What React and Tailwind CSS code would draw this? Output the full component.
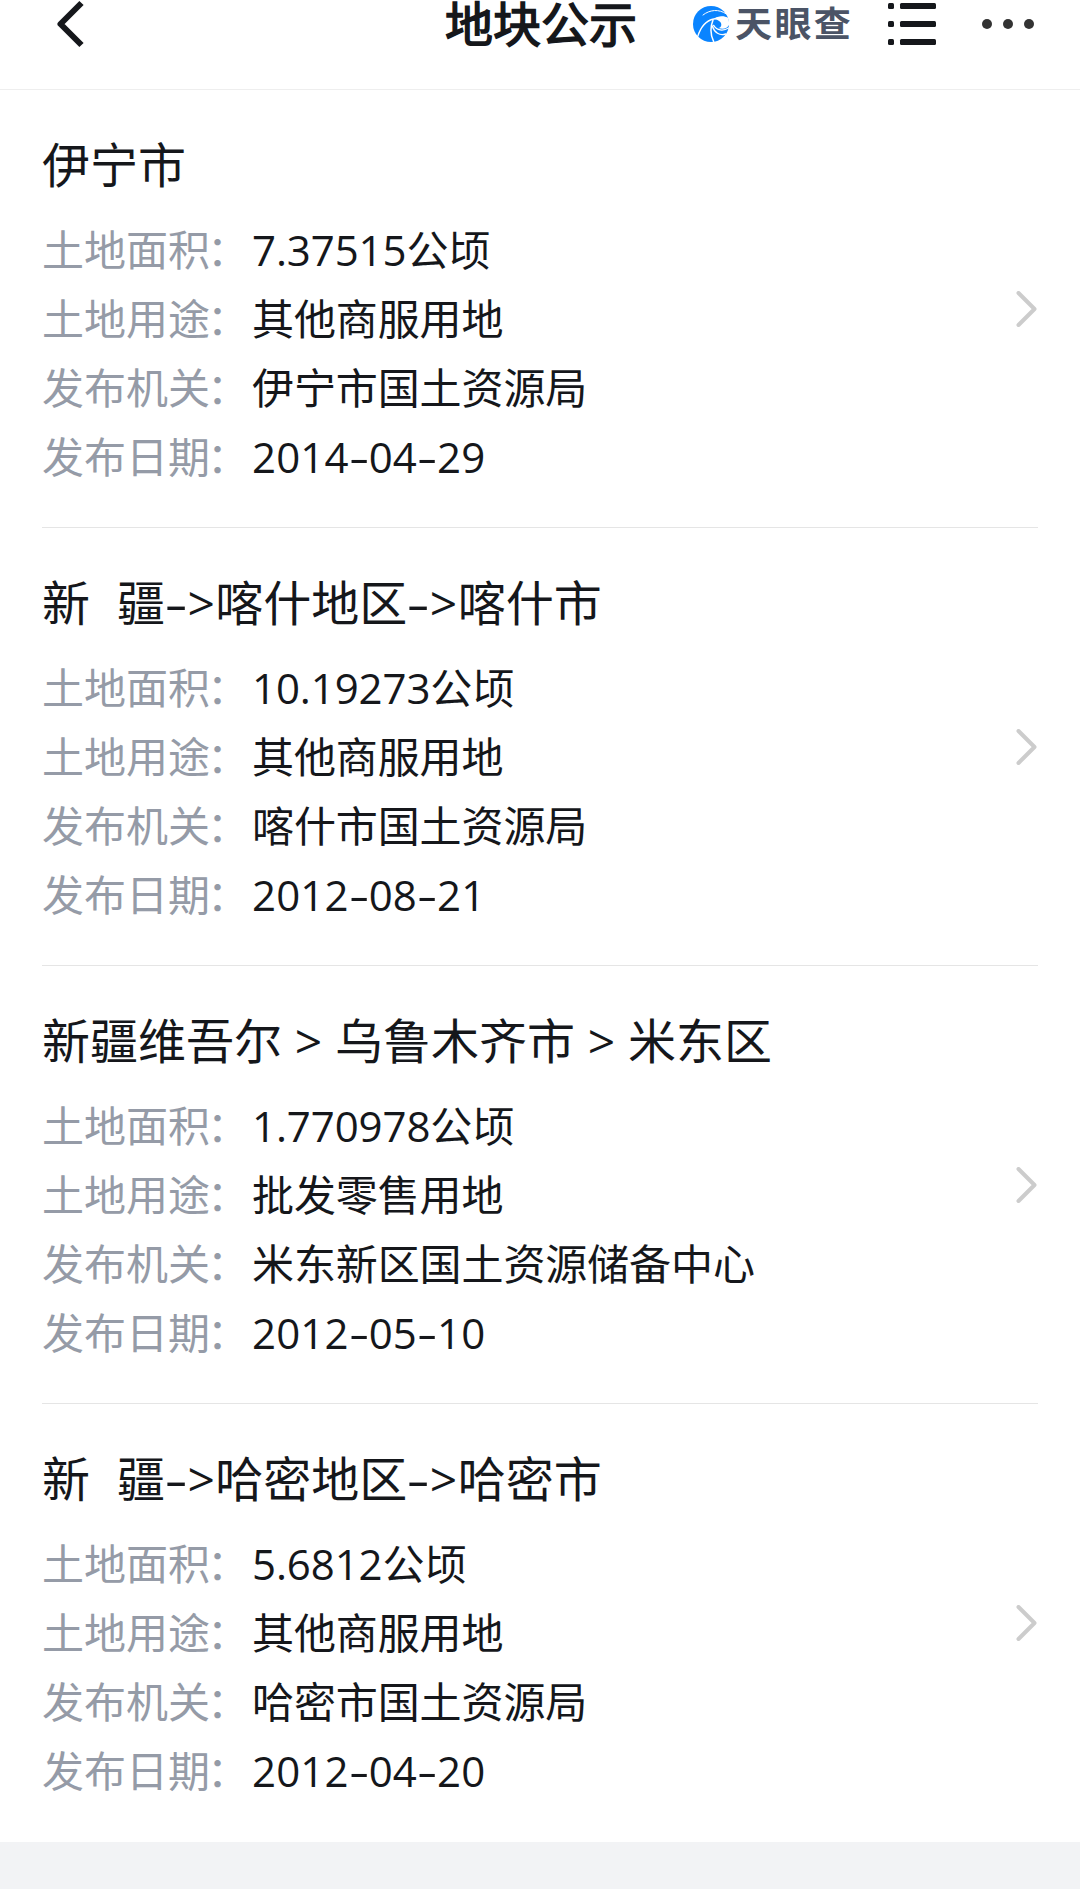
import React from 'react';

const parcels = [
    { region: '伊宁市', area: '7.37515公顷', usage: '其他商服用地', agency: '伊宁市国土资源局', date: '2014-04-29' },
    { region: '新  疆->喀什地区->喀什市', area: '10.19273公顷', usage: '其他商服用地', agency: '喀什市国土资源局', date: '2012-08-21' },
    { region: '新疆维吾尔 > 乌鲁木齐市 > 米东区', area: '1.770978公顷', usage: '批发零售用地', agency: '米东新区国土资源储备中心', date: '2012-05-10' },
    { region: '新  疆->哈密地区->哈密市', area: '5.6812公顷', usage: '其他商服用地', agency: '哈密市国土资源局', date: '2012-04-20' },
];

const Logo = () => (
    <svg className="w-9 h-9 shrink-0" viewBox="0 0 108 108" fill="none" strokeLinecap="round">
        <circle cx="54" cy="54" r="54" fill="#0a84ff" />
        <path d="M30 27C50 11 78 8 100 24" stroke="#fff" strokeWidth="3" />
        <path d="M60 40C74 30 92 28 106 36L109 54C106 66 92 72 76 66C84 66 88 56 82 48C76 42 68 40 60 40Z" fill="#fff" />
        <path d="M14 92C22 66 38 44 62 39C74 34 90 32 104 38" stroke="#fff" strokeWidth="4" />
        <path d="M60 42C52 62 52 86 62 107" stroke="#fff" strokeWidth="4.5" />
        <path d="M58 60C64 80 80 90 98 84" stroke="#fff" strokeWidth="4" />
        <path d="M62 58C72 74 90 76 107 66" stroke="#fff" strokeWidth="4" />
    </svg>
);

// Arrows between region names are set a little wider than the names
const Region = ({ text }) => (
    <h2 className="text-[48px] leading-[64px] whitespace-pre">
        {text.split(/(->| > )/).map((part, i) => {
            if (part === '->') {
                return (
                    <span key={i}>
                        <span className="inline-block w-[22px] text-center scale-x-150">-</span>
                        <span className="inline-block w-[28.4px] text-center">&gt;</span>
                    </span>
                );
            }
            if (part === ' > ') return <span key={i} className="tracking-[0.2px]">{part}</span>;
            return <span key={i} className="[word-spacing:1px]">{part}</span>;
        })}
    </h2>
);

const DateText = ({ value }) => value.split('-').map((part, i) => (
    <span key={i}>
        {i > 0 && <span className="inline-block w-[20px] text-center scale-x-150">-</span>}
        <span className="tracking-[0.15px]">{part}</span>
    </span>
));

const Row = ({ label, children }) => (
    <div className="flex h-[69px] text-[42px] leading-[69px] whitespace-nowrap">
        <span className="w-[210px] text-[#959ba7]">{label}<span className="-ml-[3px]">：</span></span>
        <span className="tracking-[-0.1px]">{children}</span>
    </div>
);

const App = () => {
    return (
        <div className="min-h-[1889px] bg-[#f2f3f5] text-[#15171b] font-['Open_Sans','Noto_Sans_CJK_SC',sans-serif]" lang="zh-CN">
            {/* Header */}
            <header className="h-[90px] bg-white border-b border-[#eeeeee]">
                <div className="flex items-center h-12 pl-14 pr-[46px]">
                    <svg className="w-7 h-12" viewBox="0 0 28 48" fill="none" stroke="currentColor" strokeWidth="6" strokeLinejoin="round">
                        <path d="M25.5 3L4.5 24L25.5 45" />
                    </svg>
                    <h1 className="ml-[361px] w-[192px] text-[48px] leading-[48px] font-normal whitespace-nowrap [-webkit-text-stroke:1.5px_currentColor]">地块公示</h1>
                    <div className="flex items-center ml-14">
                        <Logo />
                        <span className="ml-[6px] w-[118px] text-[37px] leading-[48px] font-bold tracking-[2.4px] text-[#4b5466] whitespace-nowrap scale-y-95">天眼查</span>
                    </div>
                    <svg className="w-12 h-12 ml-auto" viewBox="0 0 48 48" fill="currentColor">
                        {[3, 21, 39].map((y) => (
                            <g key={y}>
                                <rect x="0" y={y} width="6" height="6" rx="1.5" />
                                <rect x="12" y={y} width="36" height="6" rx="1.5" />
                            </g>
                        ))}
                    </svg>
                    <svg className="w-[52px] h-12 ml-[46px]" viewBox="0 0 52 48" fill="#333333">
                        <circle cx="5" cy="24" r="5" />
                        <circle cx="26" cy="24" r="5" />
                        <circle cx="47" cy="24" r="5" />
                    </svg>
                </div>
            </header>

            {/* Parcel list */}
            <main className="bg-white px-[42px]">
                {parcels.map((item) => (
                    <article key={item.region} className="flex items-center h-[438px] border-b border-[#e5e5e5] last:border-white">
                        <div className="flex-1 pt-[6px]">
                            <Region text={item.region} />
                            <div className="mt-[18px]">
                                <Row label="土地面积">{item.area}</Row>
                                <Row label="土地用途">{item.usage}</Row>
                                <Row label="发布机关">{item.agency}</Row>
                                <Row label="发布日期"><DateText value={item.date} /></Row>
                            </div>
                        </div>
                        <svg className="w-[22px] h-9" viewBox="0 0 22 36" fill="none" stroke="#cccccc" strokeWidth="4" strokeLinecap="round" strokeLinejoin="round">
                            <path d="M2.5 2L18.5 18L2.5 34" />
                        </svg>
                    </article>
                ))}
            </main>
        </div>
    );
};

export default App;
